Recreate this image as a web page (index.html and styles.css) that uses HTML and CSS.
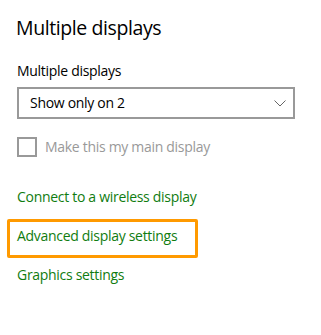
FILE: index.html
```html
<!DOCTYPE html>
<html lang="en">
<head>
    <meta charset="UTF-8">
    <meta name="viewport" content="width=device-width, initial-scale=1.0">
    <title>Multiple displays</title>
    <link rel="stylesheet" href="styles.css">
</head>
<body>
    <div class="panel">
        <h1 class="title">Multiple displays</h1>

        <div class="field-label">Multiple displays</div>
        <div class="dropdown">
            <span class="dropdown-value">Show only on 2</span>
            <svg class="chevron" width="12" height="7" viewBox="0 0 12 7">
                <polyline points="0.5,0.5 6,6 11.5,0.5" fill="none" stroke="#666" stroke-width="1"/>
            </svg>
        </div>

        <label class="check-row">
            <span class="check-box"></span>
            <span class="check-text">Make this my main display</span>
        </label>

        <div class="links">
            <a class="link" href="#">Connect to a wireless display</a>
            <a class="link link-highlight" href="#">Advanced display settings</a>
            <a class="link link-last" href="#">Graphics settings</a>
        </div>
    </div>
</body>
</html>
```

FILE: styles.css
```css
body {
    margin: 0;
    background-color: #fff;
    font-family: "Open Sans", "Noto Sans", sans-serif;
    color: #000;
    letter-spacing: -0.3px;
}
.panel {
    padding: 0 17px;
}
.title {
    margin: 14px 0 0 -1px;
    font-size: 19.5px;
    font-weight: 400;
    line-height: 28px;
    letter-spacing: -0.4px;
}
.field-label {
    margin-top: 19px;
    font-size: 14px;
    line-height: 20px;
}
.dropdown {
    margin-top: 6px;
    width: 278px;
    height: 32px;
    box-sizing: border-box;
    border: 2px solid #999;
    display: flex;
    align-items: center;
    justify-content: space-between;
    padding: 0 7px 0 11px;
}
.dropdown-value {
    font-size: 14px;
    line-height: 20px;
}
.check-row {
    margin-top: 18px;
    display: flex;
    align-items: center;
    height: 20px;
}
.check-box {
    width: 20px;
    height: 20px;
    box-sizing: border-box;
    border: 2px solid #999;
}
.check-text {
    margin-left: 8px;
    font-size: 14px;
    line-height: 20px;
    color: #999;
}
.links {
    margin-top: 30px;
}
.link {
    display: block;
    font-size: 14px;
    line-height: 20px;
    color: #107c10;
    text-decoration: none;
}
.link-highlight {
    margin: 12px 0 0 -10px;
    width: 191px;
    height: 39px;
    box-sizing: border-box;
    border: 3px solid #ff9a00;
    border-radius: 2px;
    padding: 4px 0 0 7px;
}
.link-last {
    margin-top: 7px;
}
```
